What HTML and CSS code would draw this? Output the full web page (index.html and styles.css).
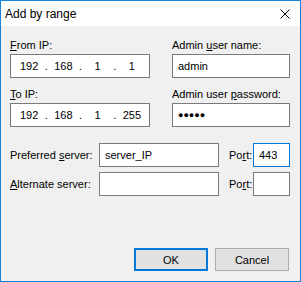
FILE: index.html
```html
<!DOCTYPE html>
<html lang="en">
<head>
  <meta charset="UTF-8">
  <title>Add by range</title>
  <link rel="stylesheet" href="styles.css">
</head>
<body>
  <div class="dialog">
    <div class="title-bar">
      <span class="title">Add by range</span>
      <svg class="close-icon" width="10" height="10" viewBox="0 0 10 10">
        <path d="M0.5 0.5 L9.5 9.5 M9.5 0.5 L0.5 9.5" stroke="#000" stroke-width="1" fill="none"/>
      </svg>
    </div>

    <div class="content">
      <div class="top-grid">
        <div class="field">
          <label><u>F</u>rom IP:</label>
          <div class="ip-box">
            <span>192</span><span class="dot">.</span><span>168</span><span class="dot">.</span><span>1</span><span class="dot">.</span><span>1</span>
          </div>
        </div>
        <div class="field">
          <label>Admin <u>u</u>ser name:</label>
          <input type="text" class="text-input" value="admin">
        </div>
        <div class="field">
          <label><u>T</u>o IP:</label>
          <div class="ip-box">
            <span>192</span><span class="dot">.</span><span>168</span><span class="dot">.</span><span>1</span><span class="dot">.</span><span>255</span>
          </div>
        </div>
        <div class="field">
          <label>Admin user <u>p</u>assword:</label>
          <div class="text-input password">&#9679;&#9679;&#9679;&#9679;&#9679;</div>
        </div>
      </div>

      <div class="server-grid">
        <label>Preferred <u>s</u>erver:</label>
        <input type="text" class="text-input" value="server_IP">
        <label class="port-label">Po<u>r</u>t:</label>
        <input type="text" class="text-input focused" value="443">

        <label><u>A</u>lternate server:</label>
        <input type="text" class="text-input" value="">
        <label class="port-label">Po<u>r</u>t:</label>
        <input type="text" class="text-input" value="">
      </div>

      <div class="buttons">
        <button class="default">OK</button>
        <button>Cancel</button>
      </div>
    </div>
  </div>
</body>
</html>
```

FILE: styles.css
```css
body {
  margin: 0;
  font-family: "Liberation Sans", Arial, sans-serif;
  font-size: 11px;
  color: #000;
}
.dialog {
  width: 301px;
  height: 282px;
  box-sizing: border-box;
  border: 1px solid #1883d7;
  background-color: #f0f0f0;
  display: flex;
  flex-direction: column;
}
.title-bar {
  height: 25px;
  background-color: #fff;
  display: flex;
  align-items: center;
  justify-content: space-between;
  padding: 0 10px 0 4px;
}
.title {
  font-size: 12px;
}
.content {
  flex: 1;
  display: flex;
  flex-direction: column;
  padding: 11px 10px 10px 9px;
}
.top-grid {
  display: grid;
  grid-template-columns: 140px 118px;
  column-gap: 22px;
  row-gap: 8px;
}
.field label {
  display: block;
  height: 16px;
  line-height: 16px;
  margin-bottom: 1px;
}
.text-input, .ip-box {
  box-sizing: border-box;
  height: 24px;
  width: 100%;
  margin: 0;
  border: 1px solid #7a7a7a;
  background-color: #fff;
  font-family: inherit;
  font-size: 11px;
  color: #000;
  padding: 0 5px;
  outline: none;
}
.password {
  display: flex;
  align-items: center;
  font-size: 9px;
  letter-spacing: 0;
}
.text-input.focused {
  border-color: #0078d7;
}
.ip-box {
  display: grid;
  grid-template-columns: 1fr 6px 1fr 6px 1fr 6px 1fr;
  align-items: center;
  text-align: center;
  padding: 0 3px 0 4px;
}
.server-grid {
  display: grid;
  grid-template-columns: 89px 120px 34px 37px;
  grid-auto-rows: 24px;
  row-gap: 5px;
  align-items: center;
  margin-top: 16px;
}
.port-label {
  padding-left: 10px;
}
.buttons {
  margin-top: auto;
  display: flex;
  justify-content: flex-end;
  gap: 7px;
  padding-right: 1px;
}
button {
  box-sizing: border-box;
  width: 74px;
  height: 23px;
  background-color: #e1e1e1;
  border: 1px solid #adadad;
  font-family: inherit;
  font-size: 11px;
  color: #000;
  padding: 0;
}
button.default {
  border: 2px solid #0078d7;
}
```
